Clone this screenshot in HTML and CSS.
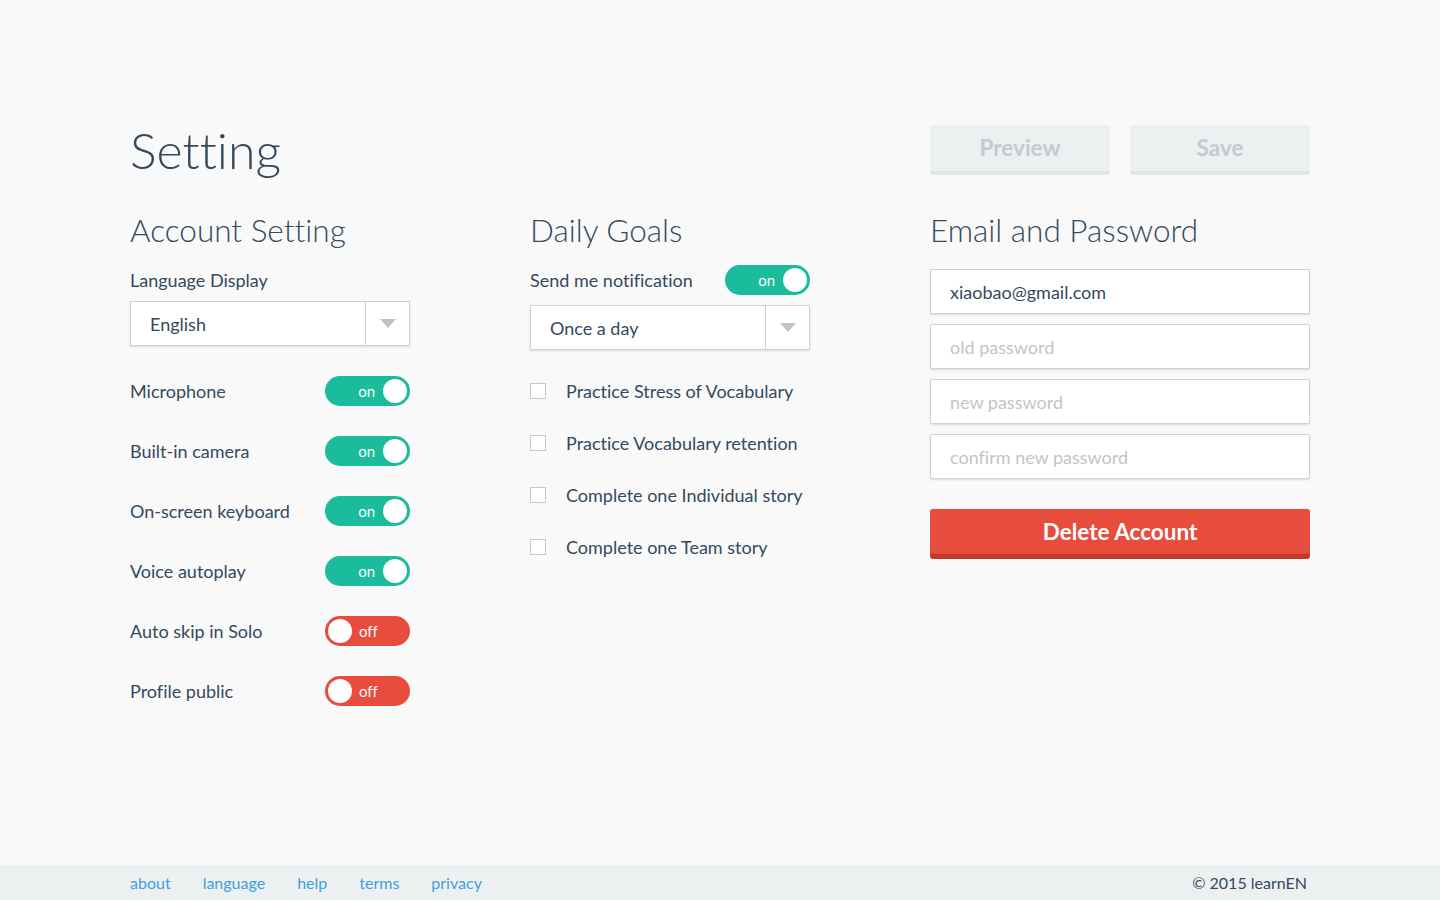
FILE: index.html
```html
<!DOCTYPE html>
<html lang="en">
<head>
<meta charset="utf-8">
<title>Setting</title>
<link rel="stylesheet" href="styles.css">
</head>
<body>
<main class="page">
  <header class="header">
    <h1 class="title">Setting</h1>
    <div class="actions">
      <button class="btn-light">Preview</button>
      <button class="btn-light">Save</button>
    </div>
  </header>

  <div class="columns">
    <section class="col">
      <h2 class="heading">Account Setting</h2>
      <div class="label">Language Display</div>
      <div class="select"><span class="select-text">English</span><span class="select-arrow"><span class="tri"></span></span></div>
      <div class="toggle-list">
        <div class="toggle-row"><span class="row-label">Microphone</span><span class="toggle on"><span class="t-text">on</span><span class="knob"></span></span></div>
        <div class="toggle-row"><span class="row-label">Built-in camera</span><span class="toggle on"><span class="t-text">on</span><span class="knob"></span></span></div>
        <div class="toggle-row"><span class="row-label">On-screen keyboard</span><span class="toggle on"><span class="t-text">on</span><span class="knob"></span></span></div>
        <div class="toggle-row"><span class="row-label">Voice autoplay</span><span class="toggle on"><span class="t-text">on</span><span class="knob"></span></span></div>
        <div class="toggle-row"><span class="row-label">Auto skip in Solo</span><span class="toggle off"><span class="knob"></span><span class="t-text">off</span></span></div>
        <div class="toggle-row"><span class="row-label">Profile public</span><span class="toggle off"><span class="knob"></span><span class="t-text">off</span></span></div>
      </div>
    </section>

    <section class="col">
      <h2 class="heading">Daily Goals</h2>
      <div class="toggle-row notify"><span class="row-label">Send me notification</span><span class="toggle on"><span class="t-text">on</span><span class="knob"></span></span></div>
      <div class="select"><span class="select-text">Once a day</span><span class="select-arrow"><span class="tri"></span></span></div>
      <ul class="checks">
        <li class="check-row"><span class="box"></span>Practice Stress of Vocabulary</li>
        <li class="check-row"><span class="box"></span>Practice Vocabulary retention</li>
        <li class="check-row"><span class="box"></span>Complete one Individual story</li>
        <li class="check-row"><span class="box"></span>Complete one Team story</li>
      </ul>
    </section>

    <section class="col col-wide">
      <h2 class="heading">Email and Password</h2>
      <div class="fields">
        <div class="field">xiaobao@gmail.com</div>
        <div class="field placeholder">old password</div>
        <div class="field placeholder">new password</div>
        <div class="field placeholder">confirm new password</div>
      </div>
      <button class="btn-danger">Delete Account</button>
    </section>
  </div>
</main>

<footer class="footer">
  <div class="footer-inner">
    <nav class="links">
      <a href="#">about</a>
      <a href="#">language</a>
      <a href="#">help</a>
      <a href="#">terms</a>
      <a href="#">privacy</a>
    </nav>
    <div class="copy">© 2015 learnEN</div>
  </div>
</footer>
</body>
</html>
```

FILE: styles.css
```css
* { box-sizing: border-box; }

html, body { margin: 0; padding: 0; }

body {
  background: #f9f9f9;
  font-family: Lato, "Open Sans", sans-serif;
  font-variant-ligatures: none;
  color: #34495e;
  min-height: 100vh;
  display: flex;
  flex-direction: column;
}

.page {
  width: 1180px;
  margin: 0 auto;
  padding-top: 120px;
  flex: 1;
}

.header {
  display: flex;
  justify-content: space-between;
  align-items: flex-start;
  height: 63px;
}

.title {
  margin: 0;
  font-weight: 300;
  font-size: 50px;
  line-height: 60px;
  color: #34495e;
}

.actions {
  display: flex;
  gap: 20px;
  margin-top: 5px;
}

.btn-light {
  width: 180px;
  height: 50px;
  border: none;
  border-bottom: 4px solid #e1e6e8;
  border-radius: 3px;
  background: #ecf0f1;
  color: #c4cacf;
  font-family: Lato, sans-serif;
  font-weight: 700;
  font-size: 22.5px;
  line-height: 44px;
  padding: 0;
}

.columns {
  display: grid;
  grid-template-columns: 400px 400px 380px;
  margin-top: 27px;
}

.col { width: 280px; }
.col-wide { width: 380px; }

.heading {
  margin: 0;
  font-weight: 300;
  font-size: 31.5px;
  line-height: 40px;
  color: #34495e;
}

.label {
  margin-top: 18px;
  font-size: 18px;
  line-height: 24px;
}

.select {
  margin-top: 9px;
  height: 45px;
  background: #fff;
  border: 1px solid #cdd2d5;
  box-shadow: 0 1px 2px rgba(0, 0, 0, 0.12);
  display: flex;
  align-items: center;
}

.select-text {
  flex: 1;
  padding-left: 19px;
  font-size: 18px;
}

.select-arrow {
  width: 44px;
  height: 100%;
  border-left: 1px solid #cdd2d5;
  display: flex;
  align-items: center;
  justify-content: center;
}

.tri {
  width: 0;
  height: 0;
  border-left: 8px solid transparent;
  border-right: 8px solid transparent;
  border-top: 9px solid #bdc3c7;
}

.toggle-list {
  margin-top: 30px;
  display: flex;
  flex-direction: column;
  gap: 30px;
}

.toggle-row {
  height: 30px;
  display: flex;
  align-items: center;
  justify-content: space-between;
  font-size: 18px;
}

.notify { margin-top: 15px; }
.notify + .select { margin-top: 10px; }

.toggle {
  width: 85px;
  height: 30px;
  border-radius: 15px;
  display: flex;
  align-items: center;
  padding: 0 3px;
  color: #fff;
  font-size: 15px;
}

.toggle.on {
  background: #1abc9c;
  justify-content: flex-end;
}

.toggle.off {
  background: #e74c3c;
  justify-content: flex-start;
}

.knob {
  width: 24px;
  height: 24px;
  border-radius: 50%;
  background: #fff;
}

.toggle.on .t-text { margin-right: 8px; margin-top: -1px; }
.toggle.off .t-text { margin-left: 7px; margin-top: -1px; }

.checks {
  list-style: none;
  margin: 29px 0 0;
  padding: 0;
  display: flex;
  flex-direction: column;
  gap: 28px;
}

.check-row {
  height: 24px;
  display: flex;
  align-items: center;
  font-size: 18px;
  white-space: nowrap;
}

.box {
  width: 16px;
  height: 16px;
  border: 1px solid #c3c9cd;
  background: #fff;
  margin-right: 20px;
  flex: none;
}

.fields {
  margin-top: 19px;
  display: flex;
  flex-direction: column;
  gap: 10px;
}

.field {
  height: 45px;
  background: #fff;
  border: 1px solid #cdd2d5;
  border-radius: 2px;
  box-shadow: 0 1px 2px rgba(0, 0, 0, 0.12);
  padding-left: 19px;
  display: flex;
  align-items: center;
  font-size: 18px;
  color: #34495e;
}

.field.placeholder { color: #bfc5ca; }

.btn-danger {
  margin-top: 30px;
  width: 380px;
  height: 50px;
  border: none;
  border-bottom: 5px solid #c0392b;
  border-radius: 3px;
  background: #e74c3c;
  color: #fff;
  font-family: Lato, sans-serif;
  font-weight: 700;
  font-size: 22.5px;
  padding: 0;
}

.footer {
  background: #ecf0f1;
  height: 35px;
}

.footer-inner {
  width: 1180px;
  margin: 0 auto;
  height: 100%;
  display: flex;
  justify-content: space-between;
  align-items: center;
}

.links {
  display: flex;
  gap: 32px;
}

.links a {
  color: #3f9fe0;
  text-decoration: none;
  font-size: 16px;
}

.copy {
  font-size: 16px;
  color: #34495e;
  padding-right: 3px;
}
```
